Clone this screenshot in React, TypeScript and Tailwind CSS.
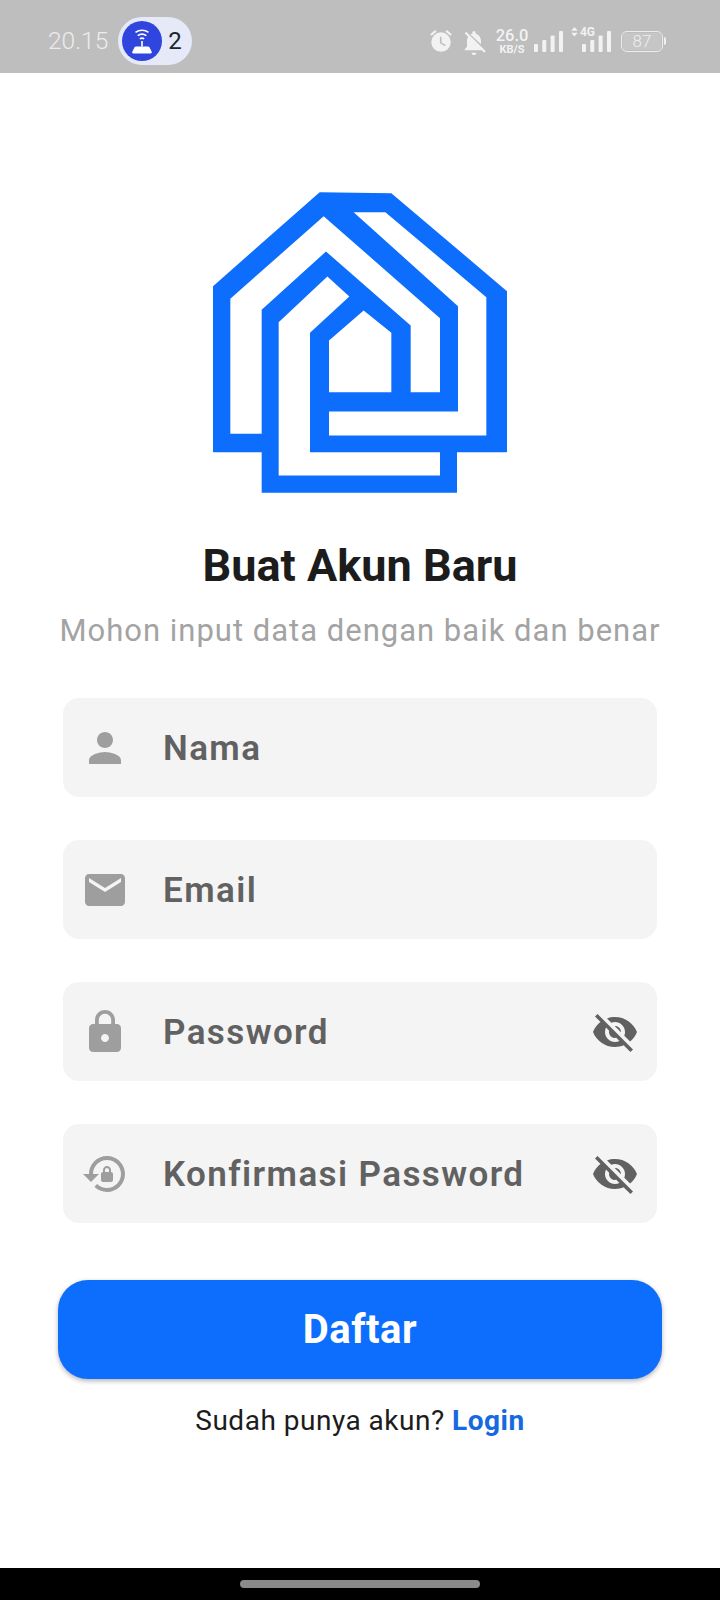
const PERSON = "M12 12c2.21 0 4-1.79 4-4s-1.79-4-4-4-4 1.79-4 4 1.79 4 4 4zm0 2c-2.67 0-8 1.34-8 4v2h16v-2c0-2.66-5.33-4-8-4z";
const EMAIL = "M20 4H4c-1.1 0-1.99.9-1.99 2L2 18c0 1.1.9 2 2 2h16c1.1 0 2-.9 2-2V6c0-1.1-.9-2-2-2zm0 4l-8 5-8-5V6l8 5 8-5v2z";
const LOCK = "M18 8h-1V6c0-2.76-2.24-5-5-5S7 3.24 7 6v2H6c-1.1 0-2 .9-2 2v10c0 1.1.9 2 2 2h12c1.1 0 2-.9 2-2V10c0-1.1-.9-2-2-2zm-6 9c-1.1 0-2-.9-2-2s.9-2 2-2 2 .9 2 2-.9 2-2 2zm3.1-9H8.9V6c0-1.71 1.39-3.1 3.1-3.1 1.71 0 3.1 1.39 3.1 3.1v2z";
const LOCK_RESET = "M13 3c-4.97 0-9 4.03-9 9H1l4 4 4-4H6c0-3.86 3.14-7 7-7s7 3.14 7 7-3.14 7-7 7c-1.9 0-3.62-.76-4.88-1.99L6.7 18.42C8.32 20.01 10.55 21 13 21c4.97 0 9-4.03 9-9s-4.03-9-9-9zm2 8v-1c0-1.1-.9-2-2-2s-2 .9-2 2v1c-.55 0-1 .45-1 1v3c0 .55.45 1 1 1h4c.55 0 1-.45 1-1v-3c0-.55-.45-1-1-1zm-1 0h-2v-1c0-.55.45-1 1-1s1 .45 1 1v1z";
const EYE_OFF = "M12 7c2.76 0 5 2.24 5 5 0 .65-.13 1.26-.36 1.83l2.92 2.92c1.51-1.26 2.7-2.89 3.43-4.75-1.73-4.39-6-7.5-11-7.5-1.4 0-2.74.25-3.98.7l2.16 2.16C10.74 7.13 11.35 7 12 7zM2 4.27l2.28 2.28.46.46C3.08 8.3 1.78 10.02 1 12c1.73 4.39 6 7.5 11 7.5 1.55 0 3.03-.3 4.38-.84l.42.42L19.73 22 21 20.73 3.27 3 2 4.27zM7.53 9.8l1.55 1.55c-.05.21-.08.43-.08.65 0 1.66 1.34 3 3 3 .22 0 .44-.03.65-.08l1.55 1.55c-.67.33-1.41.53-2.2.53-2.76 0-5-2.24-5-5 0-.79.2-1.53.53-2.2zm4.31-.78l3.15 3.15.02-.16c0-1.66-1.34-3-3-3l-.17.01z";

function Icon({ d, className }: { d: string; className: string }) {
  return (
    <svg viewBox="0 0 24 24" fill="currentColor" className={className}>
      <path d={d} />
    </svg>
  );
}

function Logo() {
  return (
    <svg viewBox="68 65 882 902" className="w-[294px] h-[301px]" fill="#0d6efd" fillRule="evenodd">
      <path d="M388 65L603 68L950 362V845H800V967H214V845H68V347Z
        M400 137L749 443V665H661V465L407 243L214 418V790H120V385Z
        M490 125H585L888 380V795H416V723H803V407Z
        M411 318L477 378L359 487V845H749V915H265V455Z
        M520 420L603 487V665H416V510Z" />
    </svg>
  );
}

function Bars({ className }: { className: string }) {
  return (
    <svg viewBox="0 0 30 21" fill="#f2f2f2" className={className}>
      <rect x="0" y="13" width="4" height="8" rx="1" />
      <rect x="8.3" y="9" width="4" height="12" rx="1" />
      <rect x="16.6" y="4.5" width="4" height="16.5" rx="1" />
      <rect x="25" y="0" width="4" height="21" rx="1" />
    </svg>
  );
}

function StatusBar() {
  return (
    <div className="h-[73px] bg-[#bebebe] flex items-center pt-[9px] pl-12 pr-[54px] shrink-0">
      <span className="text-[24.5px] font-light text-[#ececec]">20.15</span>
      <div className="ml-[10px] w-[74px] h-[48px] rounded-full bg-[#e6e9f8] flex items-center pl-1">
        <div className="w-10 h-10 rounded-full bg-[#2f45dd] flex items-center justify-center">
          <svg viewBox="0 0 24 24" className="w-[26px] h-[26px]" fill="none" stroke="white" strokeWidth="1.5">
            <path d="M6 4C9.5 1.5 14.5 1.5 18 4" />
            <path d="M8 7C10.5 5.3 13.5 5.3 16 7" />
            <path d="M10 10C11.2 9.2 12.8 9.2 14 10" />
            <path d="M12 12V17" />
            <path
              d="M6.5 17H17.5Q18.5 17 19 18L21 22Q21.5 23.5 20 23.5H4Q2.5 23.5 3 22L5 18Q5.5 17 6.5 17Z"
              fill="white"
              stroke="none"
            />
          </svg>
        </div>
        <span className="ml-[6px] text-[24px] leading-none text-[#20242c]">2</span>
      </div>
      <div className="ml-auto flex items-center">
        <svg viewBox="0 0 24 24" className="w-[26px] h-[26px]" fill="#f2f2f2">
          <path d="M22 5.7l-4.6-3.9-1.3 1.5 4.6 3.9L22 5.7zM7.9 3.4L6.6 1.9 2 5.7l1.3 1.5 4.6-3.8zM12 4a9 9 0 1 0 0 18 9 9 0 0 0 0-18z" />
          <path d="M12.5 8H11v6l4.7 2.9.8-1.2-4-2.4V8z" fill="#bebebe" />
        </svg>
        <svg viewBox="0 0 24 24" className="ml-[6px] w-[28px] h-[28px]" fill="#f2f2f2">
          <path d="M20 18.7L5.3 4 4 5.3l3 3c-.6 1-1 2.2-1 3.7v5l-2 2v1h14.7l2 2 1.3-1.3-2-2zM18 14.7V12c0-3.1-1.6-5.6-4.5-6.3V5a1.5 1.5 0 0 0-3 0v.7c-.6.1-1.1.4-1.6.7L18 14.7zM12 24c1.1 0 2-.9 2-2h-4c0 1.1.9 2 2 2z" />
        </svg>
        <div className="ml-[8px] mt-[1px] w-[32px] flex flex-col items-center text-[#f2f2f2] font-medium leading-none">
          <span className="text-[16.5px] leading-[16px]">26.0</span>
          <span className="text-[11px] leading-[12px] font-bold">KB/S</span>
        </div>
        <Bars className="ml-[6px] w-[30px] h-[21px] mt-[1px]" />
        <div className="ml-[7px] w-[24px] flex items-start self-start -mt-[1px]">
          <svg viewBox="0 0 8 12" className="w-[8px] h-[10px] mt-[1px]" fill="#f2f2f2">
            <path d="M4 0L8 4.5H0ZM0 7H8L4 11.5Z" />
          </svg>
          <span className="ml-[2px] text-[12px] font-bold leading-[12px] text-[#f2f2f2]">4G</span>
        </div>
        <Bars className="-ml-[13px] w-[30px] h-[21px] mt-[1px]" />
        <div className="ml-[9px] w-[42px] h-[21px] rounded-[6px] border-[1.5px] border-[#ececec] flex items-center justify-center p-[1px]">
          <div className="w-full h-full rounded-[3px] bg-[#c6c6c6] flex items-center justify-center">
            <span className="text-[17px] leading-none font-light text-[#eeeeee]">87</span>
          </div>
        </div>
        <div className="ml-[1px] w-[2px] h-[8px] rounded-r-sm bg-[#f0f0f0]" />
      </div>
    </div>
  );
}

function Field({ icon, label, eye }: { icon: string; label: string; eye?: boolean }) {
  return (
    <div className="h-[99px] rounded-2xl bg-[#f4f4f4] flex items-center pl-[18px] pr-[18px]">
      <Icon d={icon} className="w-12 h-12 text-[#9e9e9e] shrink-0" />
      <span className="ml-[34px] mt-[3px] text-[35px] font-semibold tracking-[1.4px] text-[#616161]">{label}</span>
      {eye && <Icon d={EYE_OFF} className="ml-auto w-12 h-12 text-[#616161] shrink-0" />}
    </div>
  );
}

export default function App() {
  return (
    <div className="w-[720px] h-[1600px] bg-white flex flex-col font-['Roboto',sans-serif]">
      <StatusBar />
      <div className="flex-1 flex flex-col items-center pt-[119px]">
        <Logo />
        <h1 className="mt-[46px] text-[45px] leading-[54px] font-bold text-[#1c1c1c]">Buat Akun Baru</h1>
        <p className="mt-[18px] text-[31px] leading-[40px] tracking-[1px] text-[#a3a3a3]">
          Mohon input data dengan baik dan benar
        </p>
        <div className="mt-[47px] w-[594px] flex flex-col gap-[43px]">
          <Field icon={PERSON} label="Nama" />
          <Field icon={EMAIL} label="Email" />
          <Field icon={LOCK} label="Password" eye />
          <Field icon={LOCK_RESET} label="Konfirmasi Password" eye />
        </div>
        <button className="mt-[57px] w-[604px] h-[99px] rounded-[30px] bg-[#0d6efd] shadow-[0_2px_5px_rgba(0,0,0,0.3)] text-white text-[40px] font-bold tracking-[0.5px]">
          Daftar
        </button>
        <p className="mt-[24px] text-[28px] leading-[36px] text-[#1c1c1c] tracking-[0.5px]">
          Sudah punya akun? <span className="font-bold text-[#1769e0]">Login</span>
        </p>
      </div>
      <div className="h-[32px] bg-black flex items-center justify-center shrink-0">
        <div className="w-[240px] h-2 rounded-full bg-[#8a8a8a]" />
      </div>
    </div>
  );
}
